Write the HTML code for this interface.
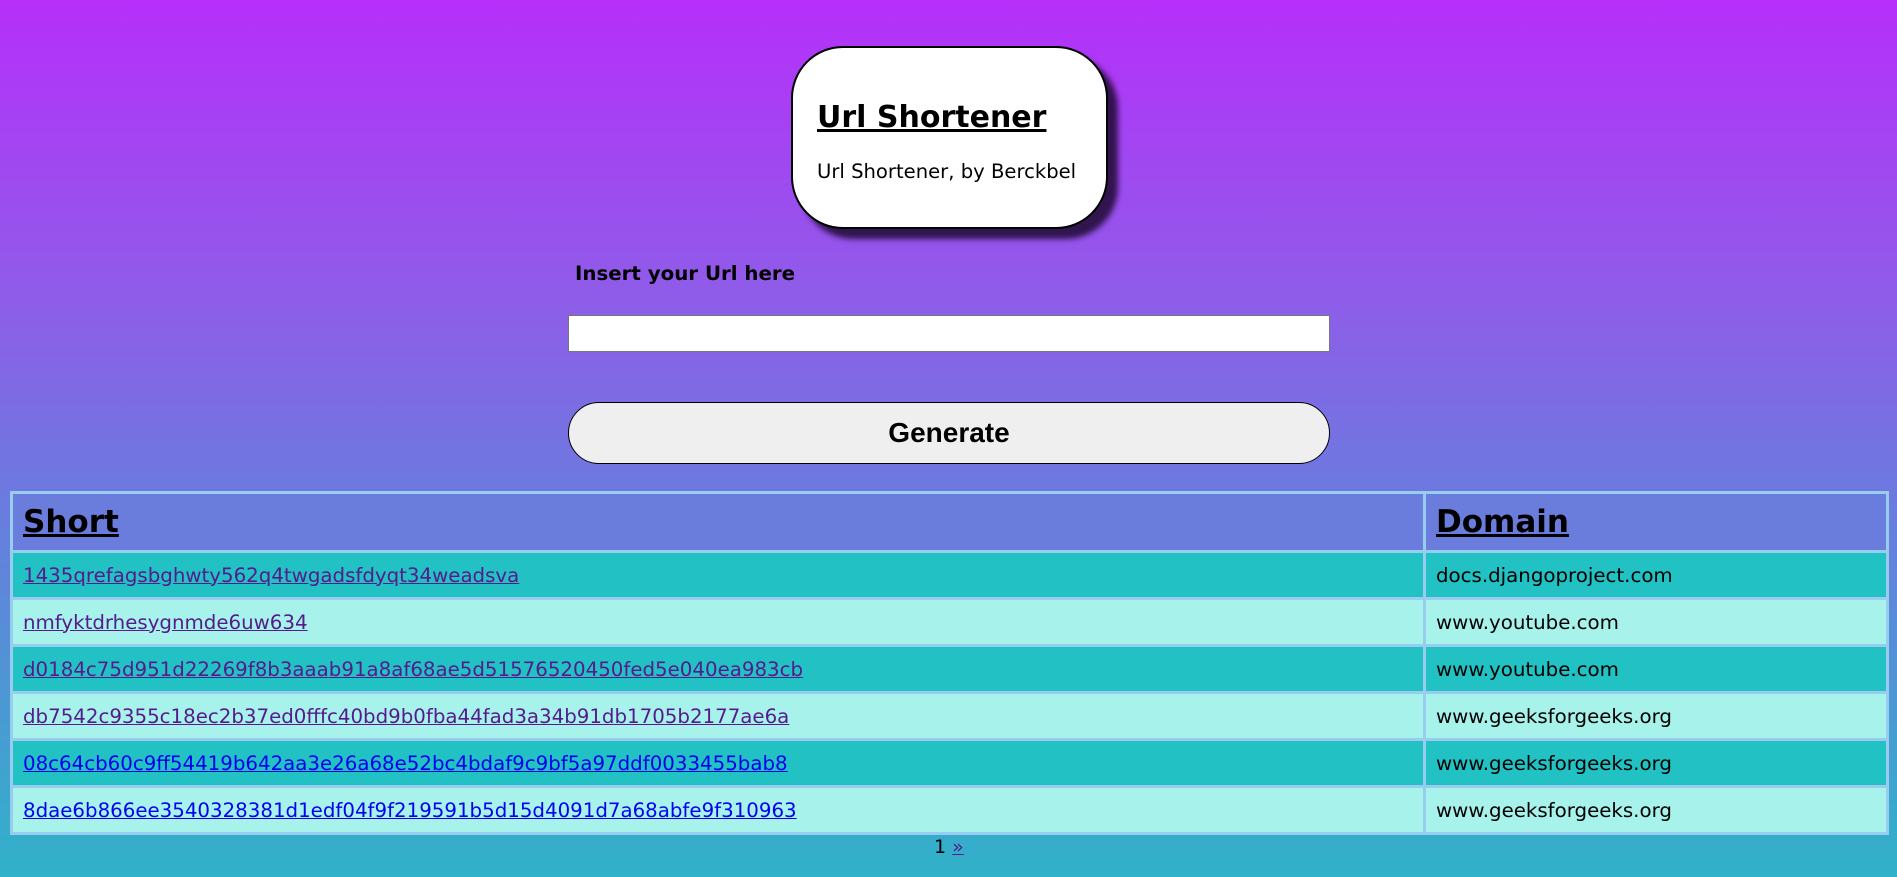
<!DOCTYPE html>
<html><head><meta charset="utf-8"><style>
html,body{margin:0;padding:0;width:1897px;height:877px;overflow:hidden}
body{background:linear-gradient(180deg,#b62ffa 0%,#8d5ee8 35%,#6e78e0 55%,#30b2c9 100%);font-family:"DejaVu Sans","Liberation Sans",sans-serif;position:relative}
.card{position:absolute;left:791px;top:46px;width:313px;height:179px;background:#fff;border:2px solid #000;border-radius:52px;box-shadow:10px 10px 6px rgba(30,10,50,.85)}
.card h1{position:absolute;left:24px;top:52px;margin:0;font-size:30px;font-weight:bold;text-decoration:underline;text-decoration-thickness:3px;color:#000}
.card p{position:absolute;left:24px;top:112px;margin:0;font-size:19.6px;color:#000}
.label{position:absolute;left:575px;top:262px;font-size:19.8px;font-weight:bold}
.input{position:absolute;left:568px;top:315px;width:760px;height:35px;background:#fff;border:1px solid #777}
.btn{position:absolute;left:568px;top:402px;width:760px;height:60px;background:#efefef;border:1.5px solid #000;border-radius:31px;font-family:"Liberation Sans",sans-serif;font-weight:bold;font-size:28px;text-align:center;line-height:60px}
table{position:absolute;left:10px;top:491px;width:1879px;border-collapse:separate;border-spacing:3px;background:#98cdf0}
td,th{padding:0 0 0 10px;text-align:left;font-size:19.8px}
th{height:56px;background:#6a7ddd;font-size:31px;font-weight:bold;text-decoration:underline}
td{height:44px}
tr.d td{background:#22c1c3}
tr.l td{background:#a8f2ec}
a{color:#551a8b}
a.b{color:#0000ee}
.pg{position:absolute;left:934px;top:836px;font-size:19px}
</style></head><body>
<div class="card"><h1>Url Shortener</h1><p>Url Shortener, by Berckbel</p></div>
<div class="label">Insert your Url here</div>
<div class="input"></div>
<div class="btn">Generate</div>
<table>
<tr><th style="width:1400px">Short</th><th>Domain</th></tr>
<tr class="d"><td><a href="#">1435qrefagsbghwty562q4twgadsfdyqt34weadsva</a></td><td>docs.djangoproject.com</td></tr>
<tr class="l"><td><a href="#">nmfyktdrhesygnmde6uw634</a></td><td>www.youtube.com</td></tr>
<tr class="d"><td><a href="#">d0184c75d951d22269f8b3aaab91a8af68ae5d51576520450fed5e040ea983cb</a></td><td>www.youtube.com</td></tr>
<tr class="l"><td><a href="#">db7542c9355c18ec2b37ed0fffc40bd9b0fba44fad3a34b91db1705b2177ae6a</a></td><td>www.geeksforgeeks.org</td></tr>
<tr class="d"><td><a class="b" href="#">08c64cb60c9ff54419b642aa3e26a68e52bc4bdaf9c9bf5a97ddf0033455bab8</a></td><td>www.geeksforgeeks.org</td></tr>
<tr class="l"><td><a class="b" href="#">8dae6b866ee3540328381d1edf04f9f219591b5d15d4091d7a68abfe9f310963</a></td><td>www.geeksforgeeks.org</td></tr>
</table>
<div class="pg">1 <a href="#">»</a></div>
</body></html>
